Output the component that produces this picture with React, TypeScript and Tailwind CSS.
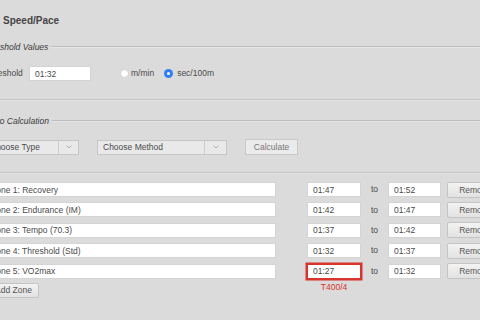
import React from 'react';

interface Zone {
  name: string;
  from: string;
  to: string;
  error?: string;
}

const ZONES: Zone[] = [
  { name: 'Zone 1: Recovery', from: '01:47', to: '01:52' },
  { name: 'Zone 2: Endurance (IM)', from: '01:42', to: '01:47' },
  { name: 'Zone 3: Tempo (70.3)', from: '01:37', to: '01:42' },
  { name: 'Zone 4: Threshold (Std)', from: '01:32', to: '01:37' },
  { name: 'Zone 5: VO2max', from: '01:27', to: '01:32', error: 'T400/4' },
];

const inputCls = 'block shrink-0 h-[15px] bg-white border border-[#d4d4d4] px-[5px] text-[8.5px] leading-[13px] text-[#4a4a4a] outline-none';

const Legend = ({ label, offset }: { label: string; offset: string }) => (
  <div className={`flex items-center h-[12px] ${offset}`}>
    <span className="italic text-[8.5px] leading-[12px] text-[#3a3a3a] whitespace-nowrap">{label}</span>
    <div className="flex-1 ml-[3px] flex flex-col">
      <div className="h-px bg-[#bdbdbd]" />
      <div className="h-px bg-[#e6e6e6]" />
    </div>
  </div>
);

const Select = ({ label, width, arrow }: { label: string; width: string; arrow: string }) => (
  <div className={`flex shrink-0 h-[15px] ${width} bg-[#e9e9e9] border border-[#c6c6c6] text-[8.5px] leading-[13px] text-[#4a4a4a]`}>
    <span className="flex-1 pl-[5px] whitespace-nowrap">{label}</span>
    <span className={`${arrow} border-l border-[#cdcdcd] flex items-center justify-center`}>
      <svg width="6" height="4" viewBox="0 0 6 4"><path d="M0.5 0.5 L3 3 L5.5 0.5" fill="none" stroke="#a8a8a8" strokeWidth="0.9" /></svg>
    </span>
  </div>
);

const Separator = ({ mt }: { mt: string }) => (
  <div className={`${mt} flex flex-col`}>
    <div className="h-px bg-[#c2c2c2]" />
    <div className="h-px bg-[#e4e4e4]" />
  </div>
);

export default function App() {
  return (
    <div className="w-[480px] h-[320px] overflow-hidden bg-[#dcdbdb] text-[#4a4a4a]" style={{ fontFamily: '"Liberation Sans", Arial, sans-serif' }}>
      <div className="ml-[-20px] w-[560px] flex flex-col pt-[15px]">
        {/* Title */}
        <div className="ml-[23px] h-[12px] leading-[12px] text-[10px] font-bold text-[#444]">Speed/Pace</div>

        {/* Threshold Values */}
        <div className="mt-[14px]">
          <Legend label="Threshold Values" offset="ml-[2.5px]" />
        </div>
        <div className="mt-[13px] flex items-center h-[15px]">
          <span className="ml-[5px] w-[44px] shrink-0 text-[8.5px] whitespace-nowrap">Threshold</span>
          <input className={`${inputCls} w-[62px]`} defaultValue="01:32" />
          <span className="ml-[29px] shrink-0 w-[9px] h-[9px] rounded-full bg-white border border-[#d0d0d0]" />
          <span className="ml-[2px] text-[8.5px]">m/min</span>
          <span className="ml-[10px] shrink-0 w-[9px] h-[9px] rounded-full bg-[#2f7ff5] flex items-center justify-center">
            <span className="w-[3px] h-[3px] rounded-full bg-white" />
          </span>
          <span className="ml-[4px] text-[8.5px]">sec/100m</span>
        </div>
        <Separator mt="mt-[18px]" />

        {/* Auto Calculation */}
        <div className="mt-[14px]">
          <Legend label="Auto Calculation" offset="ml-[7px]" />
        </div>
        <div className="mt-[12px] flex items-center h-[16px]">
          <div className="ml-[4px]"><Select label="Choose Type" width="w-[95px]" arrow="w-[20px]" /></div>
          <div className="ml-[18px]"><Select label="Choose Method" width="w-[130px]" arrow="w-[22px]" /></div>
          <button className="ml-[18px] shrink-0 w-[53px] h-[16px] bg-[#ebebeb] border border-[#c8c8c8] text-[8.5px] leading-[14px] text-[#777]">Calculate</button>
        </div>
        <Separator mt="mt-[17px]" />

        {/* Zones */}
        <div className="mt-[8px] flex flex-col gap-[5.4px]">
          {ZONES.map((zone) => (
            <div key={zone.name} className="flex items-center h-[15px]">
              <input className={`${inputCls} ml-[5px] w-[291px]`} defaultValue={zone.name} />
              <div className="relative flex shrink-0 ml-[31px]">
                <input
                  className={`${inputCls} w-[54px] ${zone.error ? 'border-[#d7342c] ring-[1.5px] ring-[#d7342c]' : ''}`}
                  defaultValue={zone.from}
                />
                {zone.error && (
                  <span className="absolute left-0 right-0 top-[18px] text-center text-[8.5px] leading-[10px] text-[#d7342c]">{zone.error}</span>
                )}
              </div>
              <span className="ml-[10px] w-[17px] shrink-0 text-[8.5px]">to</span>
              <input className={`${inputCls} w-[53px]`} defaultValue={zone.to} />
              <button className="ml-[6px] shrink-0 w-[56px] h-[16px] bg-gradient-to-b from-[#f3f3f3] to-[#e2e2e2] border border-[#c4c4c4] text-[8.5px] leading-[14px] text-[#555] rounded-[2px]">Remove</button>
            </div>
          ))}
        </div>

        <div className="mt-[4.5px] flex">
          <button className="ml-[8px] w-[51px] h-[15px] bg-gradient-to-b from-[#f3f3f3] to-[#e2e2e2] border border-[#c4c4c4] text-[8.5px] leading-[13px] text-[#555] rounded-[2px]">Add Zone</button>
        </div>
      </div>
    </div>
  );
}
